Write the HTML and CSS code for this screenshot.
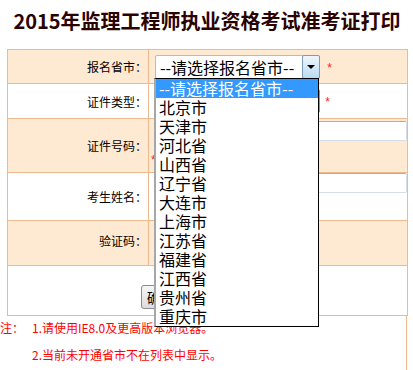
FILE: index.html
```html
<!DOCTYPE html>
<html lang="zh-CN">
<head>
<meta charset="UTF-8" />
<title>2015年监理工程师执业资格考试准考证打印</title>
<link rel="stylesheet" href="styles.css">
</head>
<body>

<div class="page">
  <h1 class="title">2015年监理工程师执业资格考试准考证打印</h1>

  <!-- 表单 -->
  <table class="form">
    <tr class="shade r1">
      <td class="label">报名省市：</td>
      <td class="field">
        <div class="fakeSelect">
          <span class="fakeSelectText">--请选择报名省市--</span>
          <span class="fakeSelectBtn"><i class="caret"></i></span>
        </div>
        <span class="req req-wide">*</span>
      </td>
    </tr>
    <tr class="r2">
      <td class="label">证件类型：</td>
      <td class="field">
        <div class="fakeSelect"><span class="fakeSelectText">身份证</span><span class="fakeSelectBtn"><i class="caret"></i></span></div>
        <span class="req">*</span>
      </td>
    </tr>
    <tr class="shade r3">
      <td class="label">证件号码：</td>
      <td class="field top">
        <input class="txt" type="text" />
        <span class="req req-wrap">*</span>
      </td>
    </tr>
    <tr class="r4">
      <td class="label">考生姓名：</td>
      <td class="field top">
        <input class="txt" type="text" />
      </td>
    </tr>
    <tr class="shade r5">
      <td class="label label-up">验证码：</td>
      <td class="field">
        <input class="txt txt-short" type="text" />
      </td>
    </tr>
    <tr class="r6">
      <td class="actions" colspan="2">
        <button class="btn" type="button">确定</button>
        <button class="btn" type="button">重置</button>
      </td>
    </tr>
  </table>

  <!-- 说明 -->
  <div class="notes">
    <span class="notesLabel">注：</span>
    <div class="notesBody">
      <p>1.请使用IE8.0及更高版本浏览器。</p>
      <p class="second">2.当前未开通省市不在列表中显示。</p>
    </div>
  </div>

  <!-- 展开的省市下拉列表 -->
  <ul class="dropList">
    <li class="selected">--请选择报名省市--</li>
    <li>北京市</li>
    <li>天津市</li>
    <li>河北省</li>
    <li>山西省</li>
    <li>辽宁省</li>
    <li>大连市</li>
    <li>上海市</li>
    <li>江苏省</li>
    <li>福建省</li>
    <li>江西省</li>
    <li>贵州省</li>
    <li>重庆市</li>
  </ul>
</div>

</body>
</html>
```

FILE: styles.css
```css
body {
  margin: 0;
  background: #fff;
  font-family: "Liberation Sans", "Noto Sans CJK SC", sans-serif;
  font-size: 12px;
  color: #000;
}

.page {
  position: relative;
  width: 401px;
  margin-left: 7px;
}

/* 标题 */
.title {
  margin: 0 -6px 0 -7px;
  height: 49px;
  line-height: 42px;
  font-size: 20px;
  font-weight: bold;
  text-align: center;
  color: #2a0200;
  font-family: "Noto Sans CJK SC", sans-serif;
  white-space: nowrap;
}

/* 表单表格 */
.form {
  width: 401px;
  border-collapse: collapse;
  table-layout: fixed;
}

.form td {
  border: 1px solid #efb98f;
  padding: 0;
}

.form tr.shade td {
  background-color: #fee9d2;
}

.form .label {
  width: 139px;
  padding-right: 1px;
  text-align: right;
  font-family: "Noto Sans CJK SC", sans-serif;
}

.form .label-up {
  padding-bottom: 6px;
}

.form .field {
  padding-left: 6px;
  white-space: nowrap;
}

.form .field.top {
  vertical-align: top;
  white-space: normal;
}

.r1 td { height: 33px; }
.r2 td { height: 34px; }
.r3 td { height: 51px; }
.r4 td { height: 47px; }
.r5 td { height: 44px; }
.r5 td.label-up { height: 38px; }
.r6 td { height: 37px; }

.r3 .field { padding-top: 2px; }

/* 模拟下拉框 */
.fakeSelect {
  display: inline-flex;
  vertical-align: middle;
  width: 165px;
  height: 24px;
  box-sizing: border-box;
  border: 1px solid #b4bcc6;
  border-radius: 2px;
  background: #fff;
}

.fakeSelectText {
  flex: 1;
  padding-left: 4px;
  font-size: 16px;
  line-height: 22px;
  font-family: "Noto Sans CJK SC", sans-serif;
}

.fakeSelectBtn {
  width: 16px;
  border: 1px solid #7b9bb8;
  border-radius: 2px;
  margin: -1px -1px -1px 0;
  background: linear-gradient(#eef6fc, #b9dcf3);
  display: flex;
  align-items: center;
  justify-content: center;
}

.caret {
  width: 0;
  height: 0;
  border-left: 4px solid transparent;
  border-right: 4px solid transparent;
  border-top: 4px solid #000;
}

.req {
  color: #f21;
  font-size: 12px;
  line-height: 12px;
  margin-left: 2px;
  vertical-align: -2px;
}

.req-wide {
  margin-left: 4px;
}

.req-wrap {
  display: block;
  margin-left: -4px;
  margin-top: 13px;
}

/* 输入框 */
.txt {
  display: block;
  width: 252px;
  height: 20px;
  box-sizing: border-box;
  margin: 0;
  border: 1px solid #d6dde6;
  border-top-color: #a9b0b8;
  border-radius: 2px;
  background: #fff;
}

.txt-short {
  width: 90px;
}

/* 按钮 */
.actions {
  text-align: center;
  padding-top: 12px !important;
}

.btn {
  width: 60px;
  height: 24px;
  margin: 0 5px;
  border: 1px solid #8d8d8d;
  border-radius: 3px;
  background: linear-gradient(#f6f6f6, #dcdcdc);
  font-size: 14px;
  font-family: "Noto Sans CJK SC", sans-serif;
  text-align: left;
  padding: 0 0 0 5px;
}

/* 注意事项 */
.notes {
  display: flex;
  width: 407px;
  margin-left: -7px;
  height: 54px;
  box-sizing: border-box;
  border-right: 1px solid #efb98f;
  color: #f00;
  font-family: "Noto Sans CJK SC", sans-serif;
  font-size: 12px;
}

.notesLabel {
  width: 32px;
  flex: none;
  line-height: 24px;
}

.notesBody p {
  margin: 0;
  line-height: 24px;
}

.notesBody .second {
  margin-top: 3px;
}

/* 展开的下拉列表 */
.dropList {
  position: absolute;
  left: 147px;
  top: 78px;
  width: 165px;
  box-sizing: border-box;
  margin: 0;
  padding: 0;
  list-style: none;
  background: #fff;
  border: 1px solid #000;
  border-left: 2px solid #a7a7a7;
  font-family: "Noto Sans CJK SC", sans-serif;
  font-size: 16px;
  line-height: 19px;
}

.dropList li {
  padding-left: 3px;
  height: 19px;
  white-space: nowrap;
}

.dropList li.selected {
  background: #3399ff;
  color: #fff;
}
```
